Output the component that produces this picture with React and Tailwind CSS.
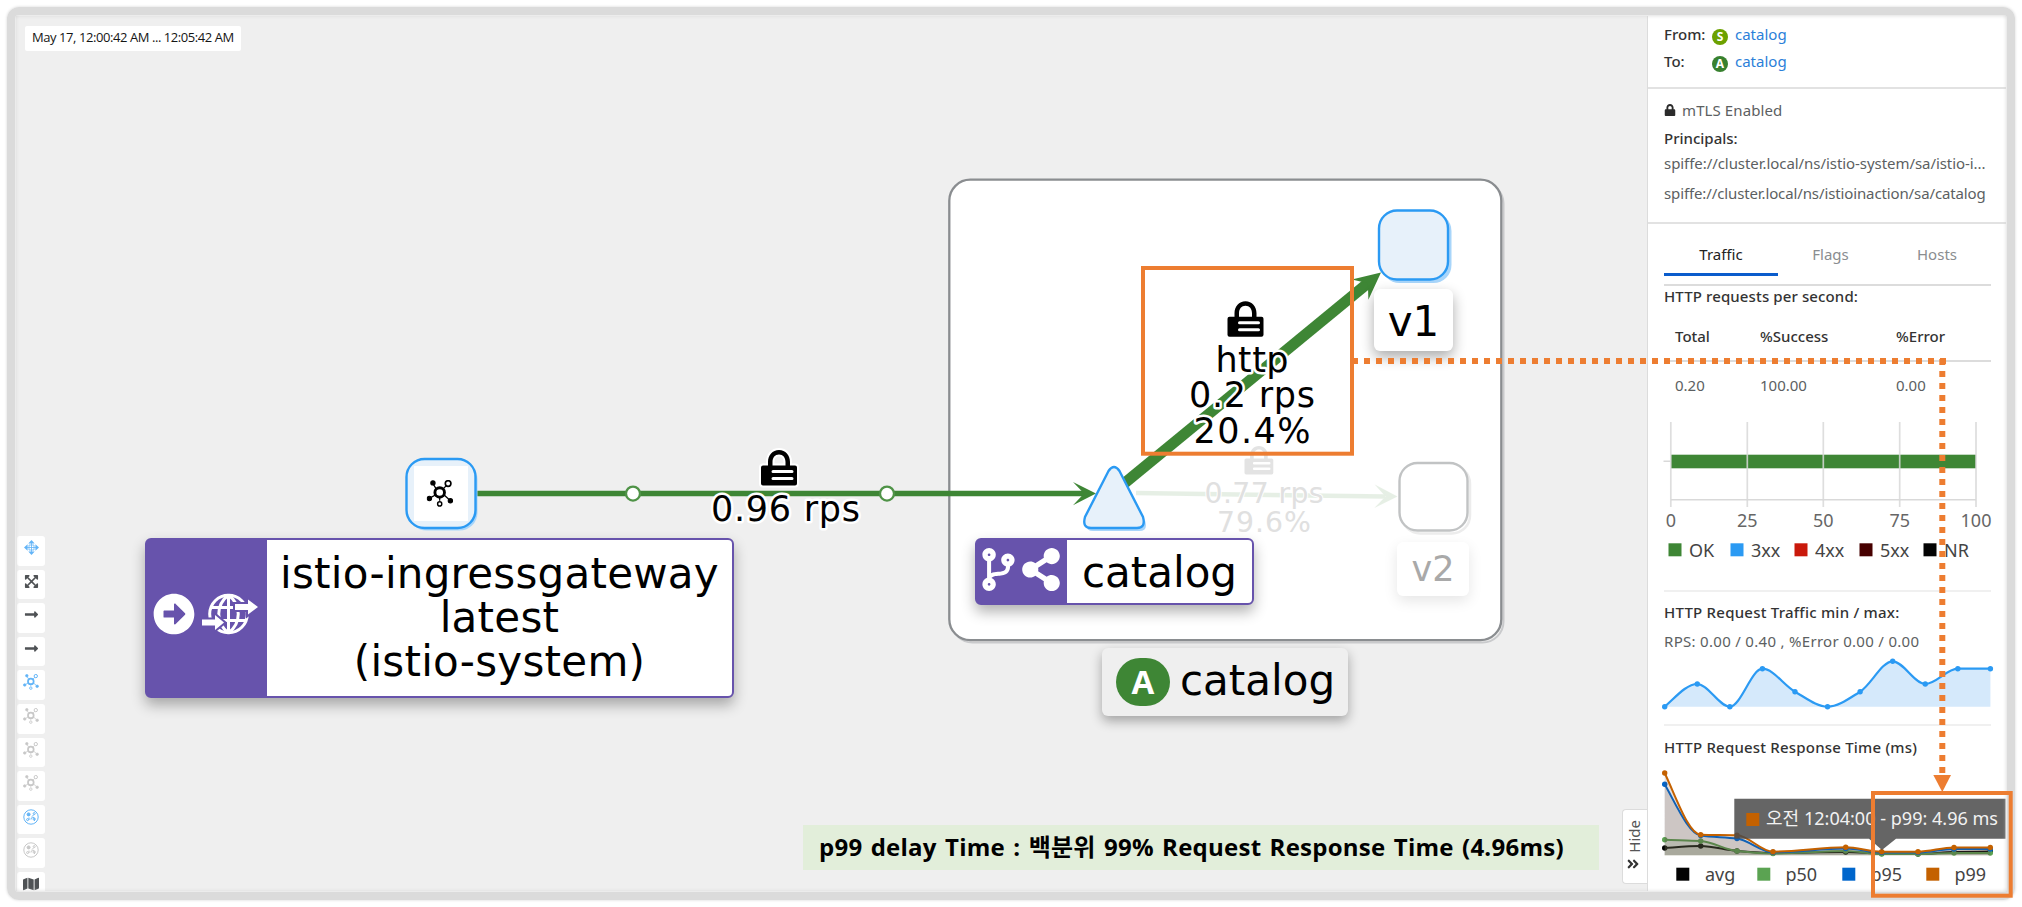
import { FaArrowAltCircleRight, FaCodeBranch, FaShareAlt, FaLock, FaExpandArrowsAlt, FaLongArrowAltRight, FaMap, FaAngleDoubleRight } from 'react-icons/fa'

const GREEN = '#3e8635'
const BLUE = '#2b9af3'
const ORANGE = '#ed7d31'

const trafficPoints = [707.7, 685, 707.7, 669.7, 692.7, 707.7, 692.7, 662.3, 685, 669.7, 669.7]
  .map((y, i) => [1664.7 + i * 32.57, y])

const responseX = [1664.7, 1700.7, 1737, 1773, 1845.7, 1881.7, 1918, 1954, 1990.3]
const responseSeries = [
  { name: 'avg', color: '#030303', ys: [849, 847, 852, 854, 853, 854.5, 855, 853, 852.5] },
  { name: 'p50', color: '#5ba352', ys: [840.7, 842, 852, 854.5, 852, 855, 855, 854, 854] },
  { name: 'p95', color: '#0066cc', ys: [785.3, 836.5, 839.5, 853.3, 849.5, 853.5, 853.5, 850, 850] },
  { name: 'p99', color: '#c46100', ys: [774, 835.7, 836.3, 852.7, 848.3, 852.7, 852.7, 848.5, 848.5] },
]

// monotone cubic interpolation, flat at local extremes
function smoothPath(pts) {
  const n = pts.length
  const d = pts.slice(1).map((p, i) => (p[1] - pts[i][1]) / (p[0] - pts[i][0]))
  const m = pts.map((_, i) => {
    if (i === 0) return d[0] * 1.25
    if (i === n - 1) return d[n - 2]
    if (d[i - 1] * d[i] <= 0) return 0
    return (2 * d[i - 1] * d[i]) / (d[i - 1] + d[i])
  })
  let path = `M${pts[0][0]},${pts[0][1]}`
  for (let i = 0; i < n - 1; i++) {
    const h = (pts[i + 1][0] - pts[i][0]) / 3
    path += `C${pts[i][0] + h},${pts[i][1] + m[i] * h} ${pts[i + 1][0] - h},${pts[i + 1][1] - m[i + 1] * h} ${pts[i + 1][0]},${pts[i + 1][1]}`
  }
  return path
}

export default function App() {
  return (
    <div className="relative flex w-[2022px] h-[907px] overflow-hidden bg-white p-4">
      <div className="flex w-[1990px] h-[875px] overflow-hidden">
        <main className="relative flex flex-col w-[1631px] bg-[#efefef] pt-2.5 pl-px">
          <Graph />
          <div className="relative ml-2 flex h-[25px] w-[216px] shrink-0 items-center bg-white rounded-xs pb-0.5 pl-[7px] font-['Open_Sans',sans-serif] text-[13px] tracking-[-0.43px] text-[#151515] whitespace-nowrap">
            May 17, 12:00:42 AM ... 12:05:42 AM
          </div>
          <Toolbar />
          <div className="absolute left-[787px] top-[809px] flex h-[45px] w-[796px] items-center bg-[#e2eeda] pb-0.5 pl-4 font-['Open_Sans','Noto_Sans_CJK_KR',sans-serif] text-[24px] font-bold tracking-[0.25px] [word-spacing:1.8px] text-black whitespace-nowrap">
            p99 delay Time : 백분위 99% Request Response Time (4.96ms)
          </div>
          <div className="absolute right-0 top-[793px] flex h-[75px] w-[25px] flex-col items-center justify-end gap-1 rounded-l border border-r-0 border-[#dcdcdc] bg-white pb-[12px] pr-1 text-[#333]">
            <span className="rotate-180 pr-px font-['Noto_Sans',sans-serif] text-[15px] leading-4 text-[#555] [writing-mode:vertical-rl]">Hide</span>
            <FaAngleDoubleRight size={14} />
          </div>
        </main>
        <SidePanel />
      </div>
      <div className="absolute left-[7px] top-[6.5px] h-[893px] w-[2008px] rounded-xl border-8 border-[#dbdbdb] shadow-[0_0_3px_#d4d4d4,inset_0_0_4px_#d0d0d0]" />
      <Annotations />
    </div>
  )
}

function Toolbar() {
  const dim = 'text-[#c8c8c8]'
  const items = [
    { icon: <MoveIcon />, cls: 'text-[#62b4f7]' },
    { icon: <FaExpandArrowsAlt size={15} />, cls: 'text-[#4f5255]' },
    { icon: <FaLongArrowAltRight size={15} />, cls: 'text-[#4f5255]' },
    { icon: <FaLongArrowAltRight size={15} />, cls: 'text-[#4f5255]' },
    { icon: <TopologyIcon />, cls: 'text-[#62b4f7]' },
    { icon: <TopologyIcon />, cls: dim },
    { icon: <TopologyIcon />, cls: dim },
    { icon: <TopologyIcon />, cls: dim },
    { icon: <NamespaceIcon />, cls: 'text-[#62b4f7]' },
    { icon: <NamespaceIcon />, cls: dim },
    { icon: <FaMap size={16} />, cls: 'text-[#4f5255]' },
  ]
  return (
    <div className="relative mt-[485px] flex w-7 flex-col gap-1">
      {items.map((item, i) => (
        <button key={i} className={`flex h-[29.6px] w-7 shrink-0 justify-center rounded-[3px] bg-white pt-1 ${item.cls}`}>
          {item.icon}
        </button>
      ))}
    </div>
  )
}

function MoveIcon() {
  return (
    <svg width="15" height="15" viewBox="0 0 15 15" fill="currentColor">
      <path d="M7.5 0l3.200 3.600h-6.400zM7.5 15l3.200-3.600h-6.400zM0 7.500l3.600-3.200v6.400zM15 7.500l-3.600-3.200v6.400z" />
      <path d="M7.500 3v9M3 7.500h9M5 5h5v5H5z" fill="none" stroke="currentColor" strokeWidth=".8" />
    </svg>
  )
}

function TopologyIcon({ size = 16 }) {
  return (
    <svg width={size} height={size} viewBox="0 0 26 26" fill="currentColor" stroke="currentColor">
      <path d="M9 8L6.5 4M16 8.5L19.5 5M8.5 14.5L4 17M17 14.5L22 19M12.7 17v3" strokeWidth="1.2" />
      <circle cx="12.7" cy="12" r="4.6" fill="none" strokeWidth="2.8" />
      <circle cx="6.2" cy="2.8" r="2.1" />
      <circle cx="23" cy="20" r="2.1" />
      <circle cx="2.8" cy="17.8" r="2.1" />
      <circle cx="20.8" cy="3.4" r="2.7" fill="none" strokeWidth="1.6" />
      <circle cx="12.7" cy="23" r="2" fill="none" strokeWidth="1.4" />
    </svg>
  )
}

function NamespaceIcon() {
  return (
    <svg width="16" height="16" viewBox="0 0 16 16" fill="none" stroke="currentColor" strokeWidth="1">
      <circle cx="8" cy="8" r="7.2" />
      <circle cx="5.6" cy="5.4" r="1.5" fill="currentColor" />
      <circle cx="11.2" cy="4.6" r="1" />
      <circle cx="4.6" cy="10.6" r="1" />
      <path d="M9 7.5l1.5-1.5M6 8.5v2.5M8 10.5a2 2 0 1 1 3 1.5" />
      <circle cx="11" cy="10" r="1" />
    </svg>
  )
}

function LockIcon({ x, y, scale = 1, color = '#000' }) {
  return (
    <g transform={`translate(${x} ${y}) scale(${scale})`} stroke="#fff" strokeWidth="4" paintOrder="stroke" strokeLinejoin="round">
      <path d="M0 17.5q0-2 2-2h5V12C7 5 11.500 0 18 0s11 5 11 12v3.500h5q2 0 2 2V33.500q0 2-2 2H2q-2 0-2-2zM11.500 15.500h13V12c0-4.500-2.500-7.500-6.500-7.500s-6.500 3-6.500 7.500z" fill={color} fillRule="evenodd" />
      <path d="M12 21.500h19M12 28.500h19" fill="none" stroke="#fff" strokeWidth="3" strokeLinecap="round" />
    </g>
  )
}

function EdgeLabel({ x, y, size = 35, width, color = '#000', halo = 5, children }) {
  return (
    <text x={x} y={y} fontSize={size} textLength={width} fill={color} textAnchor="middle" stroke="#fff" strokeWidth={halo} strokeLinejoin="round" paintOrder="stroke" fontFamily="'DejaVu Sans', sans-serif">
      {children}
    </text>
  )
}

const vee = 'M0 0L-23-11.700L-12 0L-23 11.700z'

function Graph() {
  return (
    <div className="absolute -left-4 -top-4 h-[907px] w-[1647px]">
      <svg className="absolute inset-0" width="1647" height="907" viewBox="0 0 1647 907">
        {/* app box */}
        <rect x="951.500" y="182.500" width="552" height="460" rx="21" fill="none" stroke="#c9cacc" strokeWidth="2" />
        <rect x="949.300" y="179.700" width="552" height="460.500" rx="21" fill="#fff" stroke="#8a8d90" strokeWidth="2.300" />

        {/* edges */}
        <g opacity=".12">
          <path d="M1136 493L1385 496.500" stroke={GREEN} strokeWidth="4.500" />
          <path d={vee} transform="translate(1397.500 496.600) rotate(1)" fill={GREEN} />
        </g>
        <path d="M476 493.600H1085" stroke={GREEN} strokeWidth="5.500" />
        <path d={vee} transform="translate(1096 493.600)" fill={GREEN} />
        <circle cx="633" cy="493.600" r="7" fill="#fff" stroke="#4f9347" strokeWidth="2.300" />
        <circle cx="887" cy="493.600" r="7" fill="#fff" stroke="#4f9347" strokeWidth="2.300" />
        <path d="M1115 491L1369 282.300" stroke={GREEN} strokeWidth="11" />
        <path d="M0 0L-27-13L-17 0L-27 13z" transform="translate(1381 272.500) rotate(-39.400)" fill={GREEN} />

        {/* nodes */}
        <rect x="408.500" y="461.500" width="69" height="69" rx="18" fill="#a8d5fa" />
        <rect x="406.500" y="459" width="69" height="69" rx="18" fill="#e7f1fa" stroke={BLUE} strokeWidth="2.400" />
        <rect x="414" y="466" width="54" height="55" fill="#fff" />
        <g transform="translate(426.500 480)"><TopologyIcon size={27} /></g>

        <rect x="1381.500" y="213" width="70" height="70" rx="18" fill="#a8d5fa" />
        <rect x="1379" y="210.500" width="69" height="69" rx="18" fill="#e7f1fa" stroke={BLUE} strokeWidth="2.400" />

        <path d="M1109 472Q1114 462 1119 472L1143 518Q1146 528 1137 528H1091Q1082 528 1085 518z" transform="translate(2.200 3)" fill="#a8d5fa" />
        <path d="M1108.500 471Q1114 463 1119.500 471L1143 517Q1146 528 1137 528H1091Q1082 528 1085 517z" fill="#e7f1fa" stroke={BLUE} strokeWidth="2.400" />

        <rect x="1402" y="465.500" width="68" height="68" rx="18" fill="none" stroke="#ececec" strokeWidth="2.500" />
        <rect x="1399.500" y="463" width="68" height="67.500" rx="18" fill="#fff" stroke="#c1c3c4" strokeWidth="2.400" />

        {/* edge labels */}
        <LockIcon x={761} y={450} />
        <EdgeLabel x={785.500} y={520.500} width={149}>0.96 rps</EdgeLabel>
        <LockIcon x={1244.500} y={446} scale={0.8} color="#e3e3e3" />
        <EdgeLabel x={1264} y={502.500} size={28.300} width={119} halo={2} color="#e0e0e0">0.77 rps</EdgeLabel>
        <EdgeLabel x={1264} y={531.500} size={28.300} width={94} halo={2} color="#e0e0e0">79.6%</EdgeLabel>
        <LockIcon x={1227.500} y={301.300} />
        <EdgeLabel x={1252} y={371.500} width={73}>http</EdgeLabel>
        <EdgeLabel x={1252} y={407} width={126}>0.2 rps</EdgeLabel>
        <EdgeLabel x={1252} y={442.500} width={117}>20.4%</EdgeLabel>
      </svg>

      <div className="absolute left-[145px] top-[538px] flex h-[160px] w-[589px] rounded-md border-[2.5px] border-[#6753ac] bg-white shadow-[0_7px_14px_rgba(0,0,0,0.3)]">
        <div className="flex w-[120px] items-center gap-[7px] bg-[#6753ac] pl-[6px] pb-[8px] text-white">
          <FaArrowAltCircleRight size={42} />
          <GatewayIcon />
        </div>
        <div className="flex-1 pt-[12px] text-center font-['DejaVu_Sans',sans-serif] text-[42px] leading-[44px] tracking-[0.25px] text-black">
          <div>istio-ingressgateway</div>
          <div>latest</div>
          <div>(istio-system)</div>
        </div>
      </div>

      <div className="absolute left-[975px] top-[538px] flex h-[67px] w-[279px] items-center rounded-md border-[2.5px] border-[#6753ac] bg-white shadow-[0_7px_14px_rgba(0,0,0,0.3)]">
        <div className="flex h-full w-[90px] items-center gap-[7px] bg-[#6753ac] pl-[5px] pb-1 text-white">
          <FaCodeBranch size={43} className="w-[33px]" />
          <FaShareAlt size={43} className="w-[38px]" />
        </div>
        <div className="flex-1 pt-[3px] text-center font-['DejaVu_Sans',sans-serif] text-[42px] leading-none text-black">catalog</div>
      </div>

      <div className="absolute left-[1102px] top-[648px] flex h-[68px] w-[246px] items-center gap-[10px] rounded-md bg-[#efefef] pl-[14px] pb-px shadow-[0_5px_12px_rgba(0,0,0,0.32)]">
        <div className="flex h-[48px] w-[54px] items-center justify-center rounded-[24px] bg-[#3e8635] font-['Open_Sans',sans-serif] text-[33px] font-bold leading-none text-white">A</div>
        <div className="pb-0.5 font-['DejaVu_Sans',sans-serif] text-[42px] leading-none text-black">catalog</div>
      </div>

      <div className="absolute left-[1374px] top-[289px] flex h-[62px] w-[79px] items-center justify-center rounded-md bg-white pt-1 font-['DejaVu_Sans',sans-serif] text-[42px] leading-none text-black shadow-[0_6px_14px_rgba(0,0,0,0.33)]">v1</div>
      <div className="absolute left-[1397px] top-[542px] flex h-[54px] w-[72px] items-center justify-center rounded-md bg-white font-['DejaVu_Sans',sans-serif] text-[35px] leading-none text-[#a9a9a9] shadow-[0_5px_14px_rgba(0,0,0,0.1)]">v2</div>
    </div>
  )
}

function GatewayIcon() {
  return (
    <svg width="56" height="42" viewBox="203 595 56 42" fill="none" stroke="#fff" strokeWidth="3">
      <circle cx="229.500" cy="616" r="18.800" />
      <path d="M229.500 597v38M211 609.500h37M211 622.500h37M229.500 597c-13 10-13 28 0 38M229.500 597c13 10 13 28 0 38" />
      <path d="M236 606h13v-4.500l10 7.500l-10 7.500V612h-13zM203 621.500h13v-4.500l9 7.500l-9 7.500v-4.500h-13z" fill="#fff" stroke="#6753ac" strokeWidth="4" paintOrder="stroke" />
    </svg>
  )
}

function SidePanel() {
  return (
    <aside className="w-[359px] overflow-hidden border-l border-[#dcdcdc] bg-white font-['Noto_Sans',sans-serif] text-[15px] text-[#5c5f62] whitespace-nowrap">
      <section className="h-[73px] border-b-2 border-[#e2e2e2] pl-4 pt-[5px]">
        <EndpointRow label="From:" badge="S" badgeClass="bg-[#6ca100]" />
        <EndpointRow label="To:" badge="A" badgeClass="bg-[#38812f]" />
      </section>

      <section className="h-[135px] border-b-2 border-[#e2e2e2] pl-4 pt-[7px]">
        <div className="flex h-7 items-center gap-1.5 tracking-[0.1px]">
          <FaLock size={12} className="text-[#2b2b2b]" /> mTLS Enabled
        </div>
        <div className="flex h-[29px] items-center font-medium text-[#333]">Principals:</div>
        <div className="flex h-[21px] items-center tracking-[-0.06px]">spiffe://cluster.local/ns/istio-system/sa/istio-i...</div>
        <div className="flex h-[39px] items-center tracking-[-0.12px]">spiffe://cluster.local/ns/istioinaction/sa/catalog</div>
      </section>

      <section className="ml-4 w-[327px]">
        <div className="flex h-[62px] items-start border-b-2 border-[#dcdcdc] pt-[14px]">
          <div className="flex h-[38px] w-[114px] justify-center border-b-[3.5px] border-[#0a5ccc] leading-[32px] text-[#222]">Traffic</div>
          <div className="w-[105px] text-center leading-[32px] text-[#8a8d90]">Flags</div>
          <div className="w-[108px] text-center leading-[32px] text-[#8a8d90]">Hosts</div>
        </div>
        <div className="flex h-[23px] items-center pb-0.5 font-medium tracking-[0.12px] text-[#333]">HTTP requests per second:</div>
        <div className="grid h-[53px] grid-cols-[85px_136px_1fr] items-center border-b-2 border-[#dcdcdc] pl-[11px] pt-1 font-medium text-[#333]">
          <span>Total</span>
          <span>%Success</span>
          <span>%Error</span>
        </div>
        <div className="grid h-[46px] grid-cols-[85px_136px_1fr] items-center pl-[11px]">
          <span>0.20</span>
          <span>100.00</span>
          <span>0.00</span>
        </div>
        <RateChart />
        <div className="border-t-2 border-[#f0f0f0] pt-[7px]">
          <div className="flex h-[28px] items-center pb-0.5 font-medium tracking-[0.23px] text-[#333]">HTTP Request Traffic min / max:</div>
          <div className="flex h-[30px] items-center pb-0.5 tracking-[0.3px]">RPS: 0.00 / 0.40 , %Error 0.00 / 0.00</div>
        </div>
        <TrafficChart />
        <div className="flex h-[44px] items-center border-t-2 border-[#f0f0f0] font-medium tracking-[0.2px] text-[#333]">HTTP Request Response Time (ms)</div>
        <ResponseChart />
      </section>
    </aside>
  )
}

function EndpointRow({ label, badge, badgeClass }) {
  return (
    <div className="flex h-[27px] items-center">
      <span className="w-[48px] font-medium text-[#333]">{label}</span>
      <span className={`mt-1 flex size-4 items-center justify-center rounded-full text-xs font-bold text-white ${badgeClass}`}>{badge}</span>
      <span className="ml-[7px] text-[#2b7fd9]">catalog</span>
    </div>
  )
}

function RateChart() {
  const ticks = [[1670.8, '0'], [1747.3, '25'], [1823.3, '50'], [1899.7, '75'], [1976, '100']]
  const legend = [
    [1668.5, 1689, 'OK', GREEN],
    [1730.5, 1751, '3xx', BLUE],
    [1794.5, 1815, '4xx', '#c9190b'],
    [1859.5, 1880, '5xx', '#470000'],
    [1923.5, 1944, 'NR', '#030303'],
  ]
  return (
    <svg width="342" height="182" viewBox="1664 409 342 182" className="block overflow-visible text-[18px]">
      <path d="M1663.500 462.300h7M1671 500.700h305" stroke="#d9d9d9" strokeWidth="1.600" />
      <rect x="1671" y="455.700" width="305" height="13.600" fill={GREEN} />
      {ticks.map(([x, label]) => (
        <g key={label}>
          <path d={`M${x} 423V508`} stroke="#d9d9d9" strokeWidth="1.700" opacity=".85" />
          <text x={x} y="527.700" textAnchor="middle" fill="#666">{label}</text>
        </g>
      ))}
      {legend.map(([sx, tx, label, color]) => (
        <g key={label}>
          <rect x={sx} y="544.300" width="13" height="13" fill={color} />
          <text x={tx} y="557.500" fill="#444">{label}</text>
        </g>
      ))}
    </svg>
  )
}

function TrafficChart() {
  const line = smoothPath(trafficPoints)
  return (
    <svg width="342" height="67" viewBox="1664 658 342 67" className="block overflow-visible">
      <path d={`${line}V707.700H1664.700z`} fill="#d5e9fb" />
      <path d={line} fill="none" stroke={BLUE} strokeWidth="2.200" />
      {trafficPoints.map(([x, y]) => <circle key={x} cx={x} cy={y} r="2.700" fill={BLUE} />)}
    </svg>
  )
}

function ResponseChart() {
  const legend = [[1676.3, 1705, 'avg'], [1757.3, 1785.5, 'p50'], [1842.3, 1870.5, 'p95'], [1926.3, 1954.5, 'p99']]
  return (
    <svg width="342" height="122" viewBox="1664 769 342 122" className="block overflow-visible text-[18px]">
      {responseSeries.map(({ name, color, ys }) => {
        const pts = ys.map((y, i) => [responseX[i], y])
        const line = smoothPath(pts)
        return (
          <g key={name}>
            <path d={`${line}V856.300H1664.700z`} fill={name === 'p50' ? '#5ba352' : '#5c4a40'} opacity=".17" />
            <path d={line} fill="none" stroke={color} strokeWidth="2" />
            {pts.map(([x, y]) => <circle key={x} cx={x} cy={y} r="2.700" fill={color} />)}
          </g>
        )
      })}
      {legend.map(([sx, tx, label], i) => (
        <g key={label}>
          <rect x={sx} y="868.700" width="13" height="13" fill={responseSeries[i].color} />
          <text x={tx} y="881.700" fill="#444">{label}</text>
        </g>
      ))}
      {/* tooltip */}
      <path d="M1734.300 799.700H2005.500V839.700H1896L1882 851L1869 839.700H1734.300z" fill="#4a4a4a" fillOpacity=".85" />
      <rect x="1746.300" y="814" width="13" height="13" fill="#c46100" />
      <text x="1766" y="826" textLength="232" lengthAdjust="spacingAndGlyphs" fill="#f2f2f2" fontSize="18" fontFamily="'Noto Sans', 'Noto Sans CJK KR', sans-serif">오전 12:04:00 - p99: 4.96 ms</text>
    </svg>
  )
}

function Annotations() {
  return (
    <svg className="absolute inset-0" width="2022" height="907" viewBox="0 0 2022 907" fill="none" stroke={ORANGE}>
      <rect x="1143" y="268" width="209" height="185.700" strokeWidth="4" />
      <rect x="1873" y="793" width="137.700" height="102.700" strokeWidth="4" />
      <path d="M1352 361H1946M1942.300 359V773" strokeWidth="6" strokeDasharray="6 6" />
      <path d="M1933.300 775H1951L1942.300 792z" fill={ORANGE} stroke="none" />
    </svg>
  )
}
